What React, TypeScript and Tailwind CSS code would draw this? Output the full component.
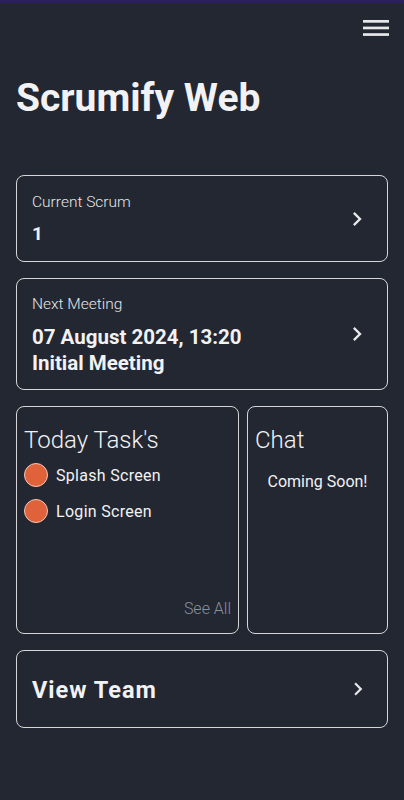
import React from "react";

function Chevron({ size = 28 }: { size?: number }) {
  return (
    <svg width={size} height={size} viewBox="0 0 24 24" fill="#e8e8ea" className="shrink-0">
      <path d="M10 6L8.59 7.41 13.17 12l-4.58 4.59L10 18l6-6z" />
    </svg>
  );
}

function Menu() {
  return (
    <svg width="26" height="16" viewBox="0 0 26 16" fill="#e8e8ea">
      <rect x="0" y="0" width="26" height="2.7" />
      <rect x="0" y="6.6" width="26" height="2.7" />
      <rect x="0" y="13.2" width="26" height="2.7" />
    </svg>
  );
}

function Dot() {
  return <div className="w-6 h-6 rounded-full bg-[#e0623a] border border-[#f2c8b8] shrink-0" />;
}

export default function App() {
  return (
    <div
      className="min-h-[800px] w-full bg-[#222731] text-[#f2f2f4] flex flex-col"
      style={{ fontFamily: "Roboto, 'Noto Sans', sans-serif" }}
    >
      <div className="h-[3px] bg-[#2d1d63]" />
      <div className="flex justify-end pt-[17px] pr-[15px]">
        <Menu />
      </div>
      <h1 className="mt-[38px] px-4 text-[39px] leading-[48px] font-bold text-[#f2f2f4]">Scrumify Web</h1>

      <div className="px-4 mt-[53px] flex flex-col gap-4">
        <div className="border border-[#d6d6d8] rounded-lg flex items-center justify-between pl-[15px] pr-4">
          <div className="pt-4 pb-[14px]">
            <div className="text-[15.5px] leading-5 font-light text-[#e6e6e8]">Current Scrum</div>
            <div className="mt-[9px] text-[19px] leading-[26px] font-bold">1</div>
          </div>
          <Chevron />
        </div>

        <div className="border border-[#d6d6d8] rounded-lg flex items-center justify-between pl-[15px] pr-4">
          <div className="pt-[15px] pb-[13px]">
            <div className="text-[15.5px] leading-5 font-light text-[#e6e6e8]">Next Meeting</div>
            <div className="mt-[10px] text-[20.5px] leading-[26px] font-bold">
              <div>07 August 2024, 13:20</div>
              <div>Initial Meeting</div>
            </div>
          </div>
          <Chevron />
        </div>

        <div className="flex gap-2 h-[228px]">
          <div className="w-[223px] border border-[#d6d6d8] rounded-lg flex flex-col px-[7px] pt-[18px] pb-3">
            <div className="text-[24px] leading-[30px] font-light">Today Task's</div>
            <div className="mt-[8px] flex flex-col gap-3">
              <div className="flex items-center gap-2">
                <Dot />
                <span className="text-[16px] leading-6 tracking-[0.3px] translate-y-[1px]">Splash Screen</span>
              </div>
              <div className="flex items-center gap-2">
                <Dot />
                <span className="text-[16px] leading-6 tracking-[0.3px] translate-y-[1px]">Login Screen</span>
              </div>
            </div>
            <div className="mt-auto text-right text-[16px] leading-6 font-light text-[#8b9099]">See All</div>
          </div>
          <div className="flex-1 border border-[#d6d6d8] rounded-lg flex flex-col px-[7px] pt-[18px]">
            <div className="text-[24px] leading-[30px] font-light">Chat</div>
            <div className="mt-[15px] text-center text-[16px] leading-6">Coming Soon!</div>
          </div>
        </div>

        <div className="h-[78px] border border-[#d6d6d8] rounded-lg flex items-center justify-between pl-[15px] pr-4">
          <div className="text-[23.5px] leading-8 font-bold tracking-[1px] translate-y-[1px]">View Team</div>
          <Chevron size={26} />
        </div>
      </div>
    </div>
  );
}
